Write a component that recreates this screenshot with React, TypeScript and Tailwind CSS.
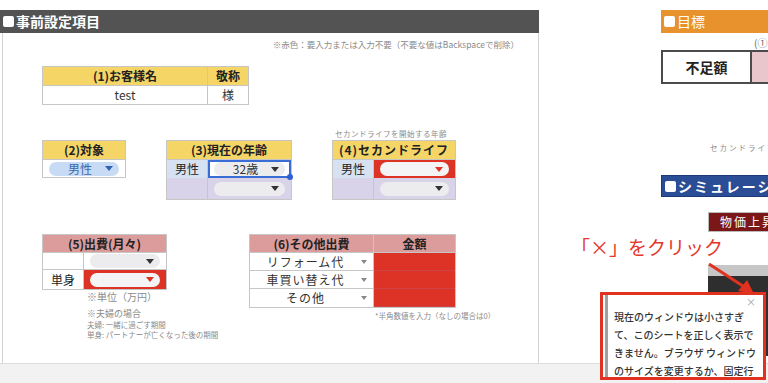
const Tri = ({ color = "#333" }: { color?: string }) => (
  <svg width="8" height="5" viewBox="0 0 8 5" className="shrink-0">
    <path d="M0 0h8L4 5z" fill={color} />
  </svg>
);

// 丸いドロップダウン（スプレッドシートのチップ）
function Pill({ cls, label, tri, text }: { cls: string; label?: string; tri?: string; text?: string }) {
  return (
    <div className={`h-[14px] rounded-full flex items-center justify-between px-[6px] ${cls}`}>
      <span className={`flex-1 text-center text-[12px] leading-none ${text ?? ""}`}>{label}</span>
      <Tri color={tri} />
    </div>
  );
}

const Small = ({ children, cls }: { children: React.ReactNode; cls: string }) => (
  <div className={`whitespace-nowrap text-[#8a8a8a] ${cls}`}>{children}</div>
);

export default function App() {
  return (
    <div className="relative w-[768px] h-[383px] overflow-hidden bg-white font-['Noto_Sans_CJK_JP',sans-serif] text-[#222]">
      <div className="flex h-[363px]">
        {/* 左：事前設定項目 */}
        <div className="w-[539px] pt-[10px] flex flex-col">
          <div className="h-[23px] bg-[#535353] text-white font-bold text-[14px] flex items-center pl-[3px] gap-[2px]">
            <span className="w-[11px] h-[11px] bg-white rounded-[2px]" />
            事前設定項目
          </div>
          <div className="flex-1 ml-[2px] border-l border-r border-[#d2d2d2] flex flex-col">
            <Small cls="mt-[5px] text-right pr-[19px] text-[8.5px] leading-[12px]">
              ※赤色：要入力または入力不要（不要な値はBackspaceで削除）
            </Small>

            {/* (1) */}
            <div className="mt-[16px] ml-[39px] w-[207px] border border-[#c6c6c6] text-[12px]">
              <div className="grid grid-cols-[165px_1fr] h-[19px] bg-[#f5d566] font-bold border-b border-[#c6c6c6]">
                <div className="flex items-center justify-center border-r border-[#c6c6c6]">(1)お客様名</div>
                <div className="flex items-center justify-center">敬称</div>
              </div>
              <div className="grid grid-cols-[165px_1fr] h-[18px] text-[#333]">
                <div className="flex items-center justify-center border-r border-[#c6c6c6]">test</div>
                <div className="flex items-center justify-center">様</div>
              </div>
            </div>

            {/* (2)(3)(4) */}
            <div className="mt-[23px] flex items-start text-[12px]">
              <div className="mt-[12px] ml-[39px] w-[84px] border border-[#c6c6c6]">
                <div className="h-[19px] bg-[#f5d566] font-bold flex items-center justify-center border-b border-[#c6c6c6]">(2)対象</div>
                <div className="h-[17px] flex items-center px-[6px]">
                  <Pill cls="w-full bg-[#c7dbf5]" label="男性" tri="#2f63b5" text="text-[#3b68ad]" />
                </div>
              </div>

              <div className="mt-[12px] ml-[40px] w-[126px] border border-[#c6c6c6]">
                <div className="h-[19px] bg-[#f5d566] font-bold flex items-center justify-center border-b border-[#c6c6c6]">(3)現在の年齢</div>
                <div className="grid grid-cols-[41px_1fr] h-[18px]">
                  <div className="bg-[#d6e2f2] flex items-center justify-center border-r border-[#c6c6c6]">男性</div>
                  <div className="relative border-2 border-[#3a6cd6] flex items-center px-[4px]">
                    <Pill cls="w-full bg-[#ececef]" label="32歳" text="text-[#333]" />
                    <span className="absolute -right-[4px] -bottom-[4px] w-[6px] h-[6px] rounded-full bg-[#2f5fd0]" />
                  </div>
                </div>
                <div className="grid grid-cols-[41px_1fr] h-[21px] bg-[#d9d3e9]">
                  <div className="border-r border-[#c6c6c6]" />
                  <div className="flex items-center px-[6px]">
                    <Pill cls="w-full bg-[#ececef]" />
                  </div>
                </div>
              </div>

              <div className="ml-[40px] w-[124px]">
                <Small cls="h-[12px] text-[7.5px] leading-[12px] tracking-[0.5px] pl-[3px]">セカンドライフを開始する年齢</Small>
                <div className="border border-[#c6c6c6]">
                  <div className="h-[19px] bg-[#f5d566] font-bold flex items-center justify-center border-b border-[#c6c6c6] tracking-[1px]">(4)セカンドライフ</div>
                  <div className="grid grid-cols-[41px_1fr] h-[18px]">
                    <div className="bg-[#d6e2f2] flex items-center justify-center border-r border-[#c6c6c6]">男性</div>
                    <div className="bg-[#dc3326] flex items-center px-[6px]">
                      <Pill cls="w-full bg-[#f4f4f6]" tri="#dc3326" />
                    </div>
                  </div>
                  <div className="grid grid-cols-[41px_1fr] h-[21px] bg-[#d9d3e9]">
                    <div className="border-r border-[#c6c6c6]" />
                    <div className="flex items-center px-[6px]">
                      <Pill cls="w-full bg-[#ececef]" />
                    </div>
                  </div>
                </div>
              </div>
            </div>

            {/* (5)(6) */}
            <div className="mt-[34px] flex items-start text-[12px]">
              <div className="ml-[39px] w-[125px]">
                <div className="border border-[#c6c6c6]">
                  <div className="h-[18px] bg-[#dd9c9c] font-bold flex items-center justify-center border-b border-[#c6c6c6]">(5)出費(月々)</div>
                  <div className="grid grid-cols-[41px_1fr] h-[17px] border-b border-[#c6c6c6]">
                    <div className="border-r border-[#c6c6c6]" />
                    <div className="flex items-center px-[6px]">
                      <Pill cls="w-full bg-[#ececef]" />
                    </div>
                  </div>
                  <div className="grid grid-cols-[41px_1fr] h-[19px]">
                    <div className="flex items-center justify-center border-r border-[#c6c6c6]">単身</div>
                    <div className="bg-[#dc3326] flex items-center px-[6px]">
                      <Pill cls="w-full bg-[#f4f4f6]" tri="#dc3326" />
                    </div>
                  </div>
                </div>
                <div className="pl-[45px]">
                  <Small cls="text-[10px] leading-[14px]">※単位（万円）</Small>
                  <Small cls="mt-[4px] text-[9px] leading-[12px]">※夫婦の場合</Small>
                  <Small cls="text-[7.5px] leading-[10px]">夫婦: 一緒に過ごす期間</Small>
                  <Small cls="text-[7.5px] leading-[10px]">単身: パートナーが亡くなった後の期間</Small>
                </div>
              </div>

              <div className="ml-[82px] w-[207px]">
                <div className="border border-[#c6c6c6]">
                  <div className="grid grid-cols-[124px_1fr] h-[18px] bg-[#dd9c9c] font-bold border-b border-[#c6c6c6]">
                    <div className="flex items-center justify-center border-r border-[#c6c6c6]">(6)その他出費</div>
                    <div className="flex items-center justify-center">金額</div>
                  </div>
                  {["リフォーム代", "車買い替え代", "その他"].map((t, i) => (
                    <div key={t} className={`grid grid-cols-[124px_1fr] h-[18px] ${i < 2 ? "border-b border-[#c6c6c6]" : ""}`}>
                      <div className="relative flex items-center justify-center border-r border-[#c6c6c6] tracking-[1px] text-[#333]">
                        <span className="pr-[12px]">{t}</span>
                        <svg width="6" height="4" viewBox="0 0 6 4" className="absolute right-[6px] top-[7px]">
                          <path d="M0 0h6L3 4z" fill="#888" />
                        </svg>
                      </div>
                      <div className="bg-[#dc3326] border-b border-[#c44]" />
                    </div>
                  ))}
                </div>
                <Small cls="mt-[3px] pl-[126px] text-[7.5px] leading-[10px]">*半角数値を入力（なしの場合は0）</Small>
              </div>
            </div>
          </div>
        </div>

        {/* 右：目標 / シミュレーション */}
        <div className="ml-[122px] w-[107px] overflow-hidden pt-[10px] flex flex-col">
          <div className="w-[200px] h-[23px] bg-[#e8922e] text-white text-[14px] flex items-center pl-[3px] gap-[2px]">
            <span className="w-[11px] h-[11px] bg-white rounded-[2px]" />
            目標
          </div>
          <Small cls="mt-[4px] pl-[93px] text-[10px] leading-[12px] text-[#666]">(①目標額)</Small>
          <div className="mt-[1px] flex w-[200px] h-[34px]">
            <div className="w-[91px] border-2 border-[#4b4b4b] flex items-center justify-center font-bold text-[14px]">不足額</div>
            <div className="flex-1 bg-[#e8c6cc] border-y-2 border-[#4b4b4b]" />
          </div>
          <Small cls="mt-[59px] pl-[49px] text-[7.5px] leading-[9px] tracking-[2px]">セカンドライフ</Small>
          <div className="mt-[23px] w-[200px] h-[22px] bg-[#2a4d96] border border-[#1d3a78] text-white font-bold text-[14px] flex items-center pl-[3px] gap-[2px] tracking-[2px]">
            <span className="w-[11px] h-[11px] bg-white rounded-[2px]" />
            シミュレーション
          </div>
          <div className="mt-[15px] ml-[47px] w-[120px] h-[20px] bg-[#7b1717] border border-[#bbb] text-white text-[12px] flex items-center pl-[11px] tracking-[2px]">
            物価上昇率
          </div>
          <div className="mt-[33px] ml-[47px] w-[120px]">
            <div className="h-[11px] bg-[#c6c6c6]" />
            <div className="h-[80px] bg-[#2e2e2e]" />
          </div>
        </div>
      </div>
      <div className="h-[20px] border-t border-[#dcdcdc] bg-[#f2f2f2]" />

      {/* 注釈 */}
      <div className="absolute left-[571px] top-[236px] text-[19px] leading-[22px] text-[#e4372b] whitespace-nowrap">「×」をクリック</div>
      <svg className="absolute left-[700px] top-[258px]" width="68" height="40" viewBox="0 0 68 40">
        <line x1="9" y1="6" x2="46" y2="30" stroke="#e0321f" strokeWidth="3" />
        <path d="M54 36L38 33L47 22Z" fill="#e0321f" />
      </svg>
      <div className="absolute left-[600px] top-[292px] w-[166px] h-[88px] border-[3px] border-[#e0321f] bg-white overflow-hidden">
        <div className="relative ml-[2px] h-full border-l-[3px] border-[#a0a0a0] pl-[6px] pt-[13px] text-[10px] font-medium leading-[18px] text-[#333] whitespace-nowrap">
          <span className="absolute right-[7px] top-[2px] text-[10px] leading-none text-[#aaa]">×</span>
          <div>現在のウィンドウは小さすぎ</div>
          <div>て、このシートを正しく表示で</div>
          <div>きません。ブラウザ ウィンドウ</div>
          <div>のサイズを変更するか、固定行</div>
          <div>や固定列を調整してください。</div>
        </div>
      </div>
    </div>
  );
}
